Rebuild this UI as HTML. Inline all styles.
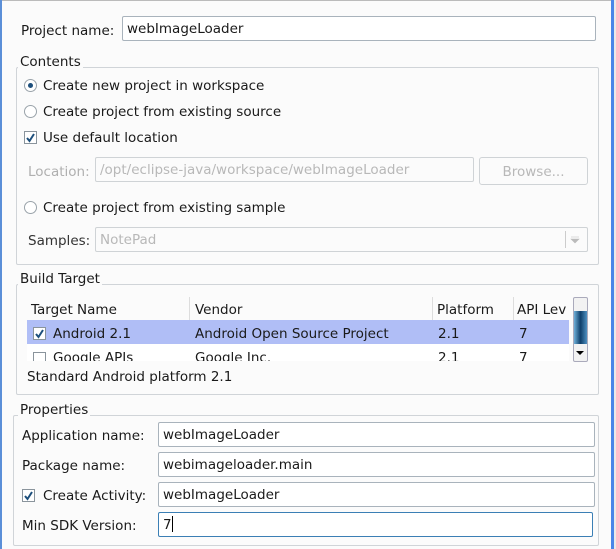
<!DOCTYPE html>
<html><head><style>
body{margin:0;width:616px;height:549px;background:#fbfbfb;font-family:"DejaVu Sans",sans-serif;font-size:13.5px;color:#1a1a1a;position:relative;overflow:hidden}
.a{position:absolute;white-space:nowrap}
.t{margin-top:2px}
.in{position:absolute;background:#fff;border:1px solid #a9b3bc;border-radius:2px;box-sizing:border-box;padding-left:4px;line-height:25px}
.dis{background:#fbfbfb;border-color:#cfd3d6;color:#b8b8b8}
.grp{position:absolute;border:1px solid #d0d4d8;border-radius:2px}
.leg{position:absolute;background:#fbfbfb;padding:0 2px;line-height:14px;margin-top:2px}
.rad{position:absolute;width:11px;height:11px;border:1px solid #9aa3aa;border-radius:50%;background:#fff}
.chk{position:absolute;width:11px;height:11px;border:1px solid #8a949c;background:#fff}
</style></head><body>
<div class="a" style="left:0;top:0;width:616px;height:1px;background:#bbb"></div>
<div class="a" style="left:0;top:0;width:2px;height:549px;background:#5b8fd8"></div>
<div class="a" style="left:611px;top:0;width:3px;height:549px;background:#4a86e8"></div>
<div class="a" style="left:614px;top:0;width:2px;height:549px;background:#eaeaea"></div>

<div class="a t" style="left:21px;top:21px">Project name:</div>
<div class="in" style="left:122px;top:16px;width:474px;height:25px">webImageLoader</div>

<div class="grp" style="left:16px;top:67px;width:581px;height:196px"></div>
<div class="leg" style="left:18px;top:53px">Contents</div>
<div class="rad" style="left:24px;top:79px"></div><div class="a" style="left:28px;top:83px;width:5px;height:5px;border-radius:50%;background:#1d4f7c"></div>
<div class="a t" style="left:43px;top:76px">Create new project in workspace</div>
<div class="rad" style="left:24px;top:105px"></div>
<div class="a t" style="left:43px;top:102px">Create project from existing source</div>
<div class="chk" style="left:24px;top:131px"></div>
<svg class="a" style="left:25px;top:132px" width="11" height="11"><path d="M2 6 L4.5 9 L9 2" stroke="#1d4f7c" stroke-width="2" fill="none"/></svg>
<div class="a t" style="left:43px;top:128px">Use default location</div>
<div class="a t" style="left:28px;top:162px;color:#b0b0b0">Location:</div>
<div class="in dis" style="left:95px;top:157px;width:379px;height:25px">/opt/eclipse-java/workspace/webImageLoader</div>
<div class="in dis" style="left:479px;top:157px;width:109px;height:28px;text-align:center;padding:0;line-height:28px;border-radius:3px">Browse...</div>
<div class="rad" style="left:24px;top:201px"></div>
<div class="a t" style="left:43px;top:198px">Create project from existing sample</div>
<div class="a t" style="left:28px;top:231px;color:#333">Samples:</div>
<div class="in dis" style="left:95px;top:227px;width:493px;height:25px">NotePad</div>
<div class="a" style="left:565px;top:231px;width:1px;height:17px;background:#ccc"></div>
<svg class="a" style="left:570px;top:236px" width="10" height="8"><path d="M1 1H9M1 3H9L5 7Z" fill="#bbb" stroke="#bbb" stroke-width=".6"/></svg>

<div class="grp" style="left:16px;top:284px;width:581px;height:109px"></div>
<div class="leg" style="left:18px;top:270px">Build Target</div>
<div class="a" style="left:27px;top:297px;width:542px;height:64px;background:#fff;overflow:hidden">
 <div class="a" style="left:0;top:0;width:542px;height:23px;background:#fbfbfb;border-bottom:1px solid #e2e2e2"></div>
 <div class="a t" style="left:4px;top:3px">Target Name</div>
 <div class="a" style="left:162px;top:0;width:1px;height:23px;background:#ddd"></div>
 <div class="a t" style="left:168px;top:3px">Vendor</div>
 <div class="a" style="left:405px;top:0;width:1px;height:23px;background:#ddd"></div>
 <div class="a t" style="left:410px;top:3px">Platform</div>
 <div class="a" style="left:486px;top:0;width:1px;height:23px;background:#ddd"></div>
 <div class="a t" style="left:490px;top:3px">API Lev</div>
 <div class="a" style="left:0;top:23px;width:542px;height:24px;background:#b0bef6"></div>
 <div class="chk" style="left:6px;top:30px"></div>
 <svg class="a" style="left:7px;top:31px" width="11" height="11"><path d="M2 6 L4.5 9 L9 2" stroke="#1d4f7c" stroke-width="2" fill="none"/></svg>
 <div class="a t" style="left:26px;top:27px">Android 2.1</div>
 <div class="a t" style="left:168px;top:27px">Android Open Source Project</div>
 <div class="a t" style="left:411px;top:27px">2.1</div>
 <div class="a t" style="left:492px;top:27px">7</div>
 <div class="chk" style="left:6px;top:55px"></div>
 <div class="a t" style="left:26px;top:51px">Google APIs</div>
 <div class="a t" style="left:168px;top:51px">Google Inc.</div>
 <div class="a t" style="left:411px;top:51px">2.1</div>
 <div class="a t" style="left:492px;top:51px">7</div>
</div>
<div class="a" style="left:573px;top:297px;width:13px;height:63px;border:1px solid #aab;background:#f2f2f2;border-radius:2px"></div>
<div class="a" style="left:574px;top:311px;width:13px;height:33px;background:linear-gradient(90deg,#6fb0d8,#0e3f6a 50%,#4d8fc0)"></div>
<svg class="a" style="left:575px;top:350px" width="10" height="6"><path d="M1 1H9L5 5Z" fill="#000"/></svg>
<div class="a t" style="left:27px;top:367px">Standard Android platform 2.1</div>

<div class="grp" style="left:13px;top:415px;width:584px;height:129px"></div>
<div class="leg" style="left:18px;top:401px">Properties</div>
<div class="a t" style="left:22px;top:426px">Application name:</div>
<div class="in" style="left:158px;top:422px;width:437px;height:25px">webImageLoader</div>
<div class="a t" style="left:22px;top:456px">Package name:</div>
<div class="in" style="left:158px;top:452px;width:437px;height:25px">webimageloader.main</div>
<div class="chk" style="left:22px;top:489px"></div>
<svg class="a" style="left:23px;top:490px" width="11" height="11"><path d="M2 6 L4.5 9 L9 2" stroke="#1d4f7c" stroke-width="2" fill="none"/></svg>
<div class="a t" style="left:43px;top:486px">Create Activity:</div>
<div class="in" style="left:158px;top:482px;width:437px;height:25px">webImageLoader</div>
<div class="a t" style="left:22px;top:516px">Min SDK Version:</div>
<div class="in" style="left:158px;top:512px;width:435px;height:25px;border-color:#3b7fb5">7<span style="display:inline-block;width:1px;height:16px;background:#000;vertical-align:-3px"></span></div>
</body></html>
